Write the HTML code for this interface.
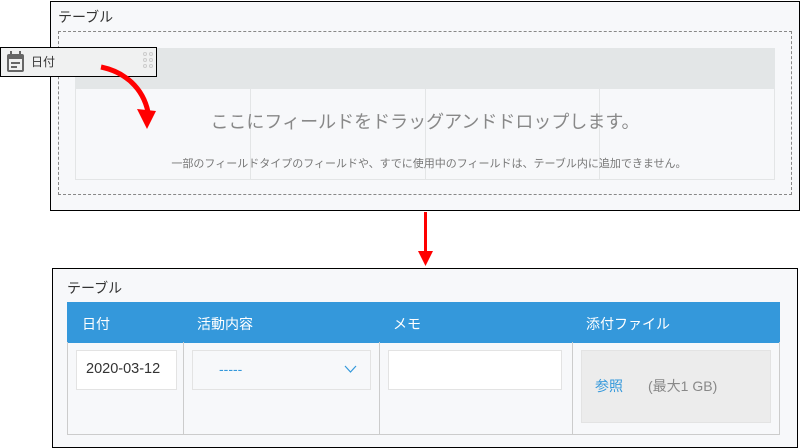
<!DOCTYPE html>
<html><head><meta charset="utf-8"><style>
*{margin:0;padding:0;box-sizing:border-box}
body{width:800px;height:448px;background:#fff;position:relative;overflow:hidden;font-family:"Liberation Sans","Noto Sans CJK JP",sans-serif;color:#333}
.a{position:absolute}
</style></head><body>
<div class="a" style="left:50px;top:1px;width:750px;height:210px;border:1px solid #000;background:#f7f8fa"></div>
<div class="a" style="left:58px;top:7px;font-size:14px;color:#333">テーブル</div>
<div class="a" style="left:58px;top:31px;width:734px;height:164px;border:1px dashed #888"></div>
<div class="a" style="left:75px;top:48px;width:700px;height:132px;border:1px solid #e3e5e6;background:#f7f8fa"></div>
<div class="a" style="left:75px;top:48px;width:700px;height:41px;background:#e3e6e7"></div>
<div class="a" style="left:250px;top:89px;width:1px;height:90px;background:#e3e5e6"></div>
<div class="a" style="left:425px;top:89px;width:1px;height:90px;background:#e3e5e6"></div>
<div class="a" style="left:599px;top:89px;width:1px;height:90px;background:#e3e5e6"></div>
<div class="a" style="left:75px;top:108px;width:700px;text-align:center;font-size:18px;color:#888">ここにフィールドをドラッグアンドドロップします。</div>
<div class="a" style="left:75px;top:155px;width:700px;text-align:center;font-size:11px;color:#777;padding-left:8px">一部のフィールドタイプのフィールドや、すでに使用中のフィールドは、テーブル内に追加できません。</div>
<div class="a" style="left:0;top:47px;width:157px;height:30px;border:1px solid #000;background:#f0f1f1"></div>
<svg class="a" style="left:6px;top:51px" width="19" height="22" viewBox="0 0 19 22"><rect x="1" y="3" width="17" height="18" rx="2" fill="#666"/><rect x="3" y="8" width="13" height="11" fill="#f0f1f1"/><rect x="4" y="0" width="2" height="5" fill="#666"/><rect x="13" y="0" width="2" height="5" fill="#666"/><rect x="5" y="11" width="9" height="2" fill="#666"/><rect x="5" y="15" width="6" height="2" fill="#666"/></svg>
<div class="a" style="left:31px;top:53px;font-size:12px;color:#333">日付</div>
<svg class="a" style="left:142px;top:51px" width="12" height="22"><g fill="none" stroke="#ccc"><circle cx="3" cy="3" r="1.5"/><circle cx="9" cy="3" r="1.5"/><circle cx="3" cy="9" r="1.5"/><circle cx="9" cy="9" r="1.5"/><circle cx="3" cy="15" r="1.5"/><circle cx="9" cy="15" r="1.5"/></g></svg>
<svg class="a" style="left:0;top:0" width="200" height="140"><path d="M101 67 C125 72 143 88 148 112" fill="none" stroke="#f00" stroke-width="5"/><path d="M137 109 L156 111 L147 129 Z" fill="#f00"/></svg>
<div class="a" style="left:424px;top:212px;width:3px;height:42px;background:#f00"></div>
<svg class="a" style="left:418px;top:251px" width="15" height="16"><path d="M0 0 L15 0 L7.5 15 Z" fill="#f00"/></svg>
<div class="a" style="left:52px;top:268px;width:746px;height:180px;border:1px solid #000;background:#f7f8fa"></div>
<div class="a" style="left:67px;top:278px;font-size:14px;color:#333">テーブル</div>
<div class="a" style="left:67px;top:302px;width:713px;height:41px;background:#3498db"></div>
<div class="a" style="left:82px;top:314px;font-size:14px;color:#fff">日付</div>
<div class="a" style="left:197px;top:314px;font-size:14px;color:#fff">活動内容</div>
<div class="a" style="left:393px;top:314px;font-size:14px;color:#fff">メモ</div>
<div class="a" style="left:586px;top:314px;font-size:14px;color:#fff">添付ファイル</div>
<div class="a" style="left:67px;top:342px;width:713px;height:93px;border:1px solid #ccc;border-top:none"></div>
<div class="a" style="left:183px;top:342px;width:1px;height:92px;background:#ccc"></div>
<div class="a" style="left:379px;top:342px;width:1px;height:92px;background:#ccc"></div>
<div class="a" style="left:572px;top:342px;width:1px;height:92px;background:#ccc"></div>
<div class="a" style="left:76px;top:350px;width:101px;height:40px;border:1px solid #e3e3e3;background:#fff;font-size:14.5px;color:#333;padding:10px 0 0 9px">2020-03-12</div>
<div class="a" style="left:192px;top:350px;width:179px;height:40px;border:1px solid #e3e3e3;background:#f7f8fa;font-size:14px;color:#3498db;padding:10px 0 0 26px">-----</div>
<svg class="a" style="left:344px;top:365px" width="13" height="9"><path d="M1 1 L6.5 7 L12 1" fill="none" stroke="#3498db" stroke-width="1.2"/></svg>
<div class="a" style="left:388px;top:350px;width:174px;height:40px;border:1px solid #e3e3e3;background:#fff"></div>
<div class="a" style="left:581px;top:350px;width:190px;height:73px;border:1px solid #e3e3e3;background:#ececec"></div>
<div class="a" style="left:595px;top:376px;font-size:14px;color:#3498db">参照</div>
<div class="a" style="left:648px;top:376px;font-size:14px;color:#888">(最大1 GB)</div>
</body></html>
